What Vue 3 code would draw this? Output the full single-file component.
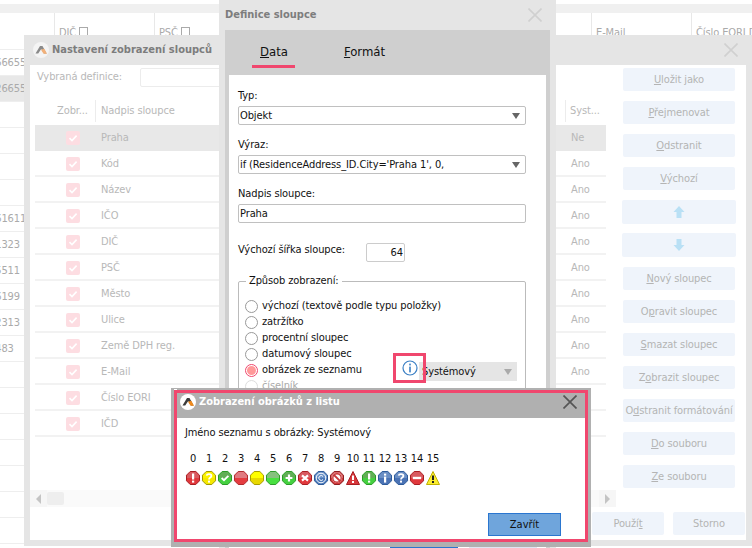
<script setup>
const bgRows = ['16665512', '12665512', '', '', '', '', '661611', '61323', '65511', '66199', '22313', '4483', '', '', '', '', '', '', '']
const cols = ['Praha','Kód','Název','IČO','DIČ','PSČ','Město','Ulice','Země DPH reg.','E-Mail','Číslo EORI','IČD']
const sideA = [['U','ložit jako'],['P','řejmenovat'],['O','dstranit'],['V','ýchozí']]
const sideB = [['N','ový sloupec'],['Op','ravit sloupec',1],['S','mazat sloupec'],['Zo','brazit sloupec',1],['Od','stranit formátování',1],['D','o souboru'],['Z','e souboru']]
const radios = ['výchozí (textově podle typu položky)','zatržítko','procentní sloupec','datumový sloupec']
const icons = [
  {c:'#e0383c',b:'#a81e22',l:'#d85a60',g:'ex'},
  {c:'#f5e800',b:'#a09800',l:'#fbf200',g:'q'},
  {c:'#44d040',b:'#2a9a26',l:'#62ae56',g:'ck'},
  {c:'#e43c40',b:'#b02a2e',l:'#e07a80',g:''},
  {c:'#e8d800',b:'#a89c00',l:'#ffff00',g:''},
  {c:'#48e040',b:'#2f9c2b',l:'#86c07e',g:''},
  {c:'#44d040',b:'#2a9a26',l:'#62ae56',g:'pl'},
  {c:'#e0383c',b:'#a81e22',l:'#d85a60',g:'x'},
  {c:'#4a78b8',b:'#2c5a9a',l:'#6a92c8',g:'co'},
  {c:'#d0383a',b:'#8e1e20',l:'#d86a6c',g:'ban'},
  {c:'#d8383c',b:'#a81e22',l:'#e87c7e',g:'tri'},
  {c:'#44d040',b:'#2a9a26',l:'#62ae56',g:'ex'},
  {c:'#4a72b4',b:'#2c5a9a',l:'#6a8ec4',g:'i'},
  {c:'#4a72b4',b:'#2c5a9a',l:'#6a8ec4',g:'q'},
  {c:'#e0383c',b:'#a81e22',l:'#d85a60',g:'mi'},
  {c:'#fbee30',b:'#c0b000',l:'#fdf680',g:'warn'}
]
</script>

<template>
  <div class="page">
    <div class="bg">
      <div class="bg-band"></div>
      <div class="bg-head">
        <div class="bg-h"></div>
        <div class="bg-h line">DIČ <i class="sq"></i></div>
        <div class="bg-h line">PSČ <i class="sq"></i></div>
        <div class="bg-h line wide"></div>
        <div class="bg-h line">E-Mail</div>
        <div class="bg-h line">Číslo EORI D</div>
      </div>
      <div v-for="(r,i) in bgRows" :key="i" class="bg-row" :class="{sel:i===1}"><span class="bg-num">{{ r }}</span></div>
    </div>

    <section class="win win-cols">
      <header class="w1-title">
        <svg class="logo" viewBox="0 0 16 16"><circle cx="8" cy="8" r="8" fill="#f4f4f4"/><path d="M2.5 11.5 7 4h2.5l4 7.5h-2.6L8.2 7 5.2 11.5z" fill="#8a8a8a"/><path d="M8 7.8 10.6 11.8H14L11.3 6.8z" fill="#f2b078"/></svg>
        <span class="w1-cap">Nastavení zobrazení sloupců</span>
        <svg class="x x1" viewBox="0 0 14 14"><path d="M0.5 0.5 13.5 13.5M13.5 0.5 0.5 13.5" stroke="#d0d0d0" stroke-width="1.6"/></svg>
      </header>
      <div class="w1-body">
        <div class="w1-left">
          <div class="def"><span class="def-l">Vybraná definice:</span><i class="def-in"></i></div>
          <div class="thead">
            <span class="c1">Zobr...</span><span class="c2">Nadpis sloupce</span><span class="c3">Syst...</span>
          </div>
          <div v-for="(c,i) in cols" :key="c" class="trow" :class="{sel:i===0}">
            <span class="c1b"><i class="cb"><svg viewBox="0 0 14 14"><path d="M3.5 7.2 6 9.6 10.6 4.6" fill="none" stroke="#fff" stroke-width="1.6"/></svg></i></span>
            <span class="c2b">{{ c }}</span><span class="c3b">{{ i===0 ? 'Ne' : 'Ano' }}</span>
          </div>
          <div class="hbar">
            <i class="arrow"><b class="tl"></b></i><i class="thumb"></i><i class="spacer"></i><i class="arrow"><b class="tr"></b></i>
          </div>
        </div>
        <div class="w1-side">
          <button v-for="b in sideA" :key="b[0]" class="btn"><u>{{ b[0] }}</u>{{ b[1] }}</button>
          <button class="btn btn-a"><svg width="12" height="14" viewBox="0 0 12 14"><path d="M6 1 11.5 7H8.5V13H3.5V7H.5z" fill="#b9e0f5"/></svg></button>
          <button class="btn btn-a"><svg width="12" height="14" viewBox="0 0 12 14"><path d="M6 13 11.5 7H8.5V1H3.5V7H.5z" fill="#b9e0f5"/></svg></button>
          <button v-for="b in sideB" :key="b[1]" class="btn">
            <template v-if="b[2]">{{ b[0][0] }}<u>{{ b[0][1] }}</u>{{ b[1] }}</template>
            <template v-else><u>{{ b[0] }}</u>{{ b[1] }}</template>
          </button>
        </div>
        <div class="w1-foot">
          <button class="btn fb">Použí<u>t</u></button>
          <button class="btn fb">Storno</button>
        </div>
      </div>
    </section>

    <section class="win win-def">
      <header class="w2-title">
        <span>Definice sloupce</span>
        <svg class="x" viewBox="0 0 14 14"><path d="M0.5 0.5 13.5 13.5M13.5 0.5 0.5 13.5" stroke="#d0d0d0" stroke-width="1.6"/></svg>
      </header>
      <div class="w2-frame">
        <nav class="tabs">
          <span class="tab on"><u>D</u>ata</span>
          <span class="tab"><u>F</u>ormát</span>
        </nav>
        <div class="panel">
          <label class="lb">Typ:</label>
          <div class="sel-box"><span>Objekt</span><b class="caret"></b></div>
          <label class="lb">Výraz:</label>
          <div class="sel-box"><span>if (ResidenceAddress_ID.City='Praha 1', 0,</span><b class="caret"></b></div>
          <label class="lb">Nadpis sloupce:</label>
          <div class="sel-box"><span>Praha</span></div>
          <div class="wid"><span class="wid-l">Výchozí šířka sloupce:</span><div class="wid-in">64</div></div>
          <fieldset class="grp">
            <legend>Způsob zobrazení:</legend>
            <div v-for="r in radios" :key="r" class="rd"><i class="ro"></i><span>{{ r }}</span></div>
            <div class="rd rd-img">
              <i class="ro on"></i><span>obrázek ze seznamu</span>
              <div class="sys"><span>Systémový</span><b class="caret lt"></b></div>
              <div class="info-box"><svg width="16" height="16" viewBox="0 0 16 16"><circle cx="8" cy="8" r="7" fill="#fff" stroke="#3a7fc4" stroke-width="1.2"/><rect x="7.2" y="3.6" width="1.6" height="1.8" fill="#3a7fc4"/><rect x="7.2" y="6.6" width="1.6" height="5.8" fill="#3a7fc4"/></svg></div>
            </div>
            <div class="rd dis"><i class="ro"></i><span>číselník</span></div>
          </fieldset>
          <div class="w2-foot"><i class="ok"></i><i class="cancel"></i></div>
        </div>
      </div>
    </section>

    <section class="win win-pop">
      <header class="w3-title">
        <svg class="logo" viewBox="0 0 16 16"><circle cx="8" cy="8" r="8" fill="#fff"/><path d="M2.5 11.5 7 4h2.5l4 7.5h-2.6L8.2 7 5.2 11.5z" fill="#3c3c3c"/><path d="M8 7.8 10.6 11.8H14L11.3 6.8z" fill="#f08a1c"/></svg>
        <span class="w3-cap">Zobrazení obrázků z listu</span>
        <svg class="x" viewBox="0 0 14 14"><path d="M0.5 0.5 13.5 13.5M13.5 0.5 0.5 13.5" stroke="#555" stroke-width="1.7"/></svg>
      </header>
      <div class="w3-body">
        <p class="w3-name">Jméno seznamu s obrázky: Systémový</p>
        <div class="ico-grid">
          <span v-for="(_,i) in icons" :key="'n'+i" class="num">{{ i }}</span>
          <svg v-for="(ic,i) in icons" :key="'i'+i" width="16" height="16" viewBox="0 0 16 16" class="ico">
            <template v-if="ic.g==='tri' || ic.g==='warn'">
              <path d="M8 1.5 14.5 14.5H1.5z" :fill="ic.c" :stroke="ic.b"/>
              <rect x="7" y="5.5" width="2" height="4.5" :fill="ic.g==='warn'?'#222':'#fff'"/>
              <rect x="7" y="11" width="2" height="2" :fill="ic.g==='warn'?'#222':'#fff'"/>
            </template>
            <template v-else>
              <path d="M5.2 1.5H10.8L14.5 5.2V10.8L10.8 14.5H5.2L1.5 10.8V5.2z" :fill="ic.c" :stroke="ic.b"/>
              <path d="M5.4 2H10.6L14 5.4V8H2V5.4z" :fill="ic.l"/>
              <template v-if="ic.g==='ex'"><rect x="7" y="3.5" width="2.2" height="6" fill="#fff"/><rect x="7" y="10.6" width="2.2" height="2" fill="#fff"/></template>
              <path v-if="ic.g==='q'" d="M5.6 5.6C6 3.6 10.4 3.6 10.4 6C10.4 7.6 8 7.4 8 9.4" fill="none" stroke="#fff" stroke-width="1.8"/>
              <rect v-if="ic.g==='q'" x="7" y="10.6" width="2" height="2" fill="#fff"/>
              <path v-if="ic.g==='ck'" d="M4.6 8 7 10.2 11.4 5.8" fill="none" stroke="#fff" stroke-width="1.8"/>
              <path v-if="ic.g==='pl'" d="M8 4.6V11.4M4.6 8H11.4" stroke="#fff" stroke-width="2.2"/>
              <path v-if="ic.g==='x'" d="M5 5.4 11 10.6M11 5.4 5 10.6" stroke="#fff" stroke-width="2.2"/>
              <template v-if="ic.g==='co'"><circle cx="8" cy="8" r="4.8" fill="none" stroke="#fff" stroke-width="1"/><path d="M10 6.4A2.4 2.4 0 1 0 10 9.6" fill="none" stroke="#fff" stroke-width="1"/></template>
              <template v-if="ic.g==='ban'"><circle cx="8" cy="8" r="5" fill="#fff"/><circle cx="8" cy="8" r="4.2" fill="none" stroke="#c8383a" stroke-width="1.4"/><path d="M4.6 4.6 11.4 11.4" stroke="#c8383a" stroke-width="2"/></template>
              <template v-if="ic.g==='i'"><rect x="7" y="3.6" width="2.2" height="2" fill="#fff"/><rect x="7" y="6.6" width="2.2" height="6" fill="#fff"/></template>
              <rect v-if="ic.g==='mi'" x="3.8" y="6.8" width="8.4" height="2.4" fill="#fff"/>
            </template>
          </svg>
        </div>
        <div class="w3-foot"><button class="close-b">Zavřít</button></div>
      </div>
    </section>
  </div>
</template>

<style>
html, body { margin: 0; background: #fff; }
</style>

<style scoped>
.page { position: relative; width: 752px; height: 548px; overflow: hidden; background: #fff; font: 11px/16px "DejaVu Sans Condensed", "DejaVu Sans", sans-serif; font-stretch: condensed; letter-spacing: -0.1px; color: #111; }
.page i { display: block; font-style: normal; }
.bg { color: #aaa; }
.bg-band { height: 9px; margin-top: 4px; background: #f0f0f0; }
.bg-head { display: flex; height: 36px; border-bottom: 1px solid #eee; }
.bg-h { width: 100px; flex: none; padding: 12px 0 0 4px; box-sizing: border-box; white-space: nowrap; }
.bg-h:first-child { width: 54px; padding: 0; }
.bg-h.wide { width: 337px; }
.bg-h.line { border-left: 1px solid #e8e8e8; }
.sq { display: inline-block !important; width: 7px; height: 7px; border: 1px solid #aaa; }
.bg-row { height: 25px; border-bottom: 1px solid #eee; display: flex; align-items: center; }
.bg-row.sel { background: #e8e8e8; }
.bg-num { margin-left: -11px; }

.win { position: absolute; box-sizing: border-box; }
.win-cols { left: 24px; top: 35px; width: 728px; height: 511px; background: #e5e5e5; padding: 0 6px 6px; display: flex; flex-direction: column; }
.w1-title { height: 30px; display: flex; align-items: center; flex: none; margin-left: 3px; padding-right: 8px; }
.logo { width: 16px; height: 16px; flex: none; }
.w1-cap { margin-left: 3px; font-weight: 700; color: #7d7d7d; letter-spacing: 0; }
.x { width: 14px; height: 14px; flex: none; margin-left: auto; }
.w1-body { position: relative; flex: 1; background: #fff; display: flex; color: #b8b8b8; }
.w1-left { width: 581px; flex: none; padding-left: 5px; box-sizing: border-box; }
.def { height: 24px; margin-bottom: 8px; display: flex; align-items: center; padding-left: 2px; }
.def-l { width: 103px; flex: none; }
.def-in { width: 240px; height: 17px; border: 1px solid #ececec; border-radius: 2px; }
.thead { height: 28px; margin-right: 5px; display: flex; align-items: center; }
.c1 { width: 61px; padding-left: 22px; box-sizing: border-box; border-right: 1px solid #ececec; line-height: 22px; }
.c2 { width: 470px; padding-left: 5px; box-sizing: border-box; border-right: 1px solid #ececec; line-height: 22px; }
.c3 { padding-left: 4px; }
.trow { height: 26px; margin-right: 5px; display: flex; align-items: center; border-bottom: 2px solid #f2f2f2; padding-top: 2px; box-sizing: border-box; }
.trow.sel { background: #e8e8e8; border-bottom-color: #e8e8e8; }
.c1b { width: 66px; padding-left: 31px; box-sizing: border-box; }
.c2b { width: 470px; }
.cb { width: 14px; height: 14px; background: #fddde2; border-radius: 2px; }
.cb svg { display: block; }
.hbar { margin-top: 53px; margin-left: -5px; margin-right: -5px; height: 17px; background: #fafafa; display: flex; }
.arrow { width: 17px; height: 17px; background: #f6f6f6; display: flex !important; align-items: center; justify-content: center; }
.thumb { width: 17px; height: 13px; margin-top: 2px; background: #eee; border-radius: 2px; }
.spacer { flex: 1; }
.tl { border: 5px solid transparent; border-right: 5px solid #c4c4c4; border-left: 0; }
.tr { border: 5px solid transparent; border-left: 5px solid #c4c4c4; border-right: 0; }
.w1-side { flex: none; width: 112px; margin-left: 12px; padding-top: 3px; display: flex; flex-direction: column; gap: 10px; }
.btn { height: 23px; width: 112px; border: 0; padding: 0; background: #eff4fb; border-radius: 2px; color: #b4b4b4; font: inherit; font-stretch: condensed; letter-spacing: inherit; flex: none; white-space: nowrap; }
.btn-a { height: 24px; width: 114px; margin-left: -1px; display: flex; align-items: center; justify-content: center; }
.btn-a + .btn-a { margin-top: -1px; }
.w1-foot { position: absolute; right: 1px; bottom: 5px; display: flex; gap: 9px; }
.fb { width: 72px; }

.win-def { left: 219px; top: 0; width: 337px; height: 548px; background: #e5e5e5; padding: 0 6px; display: flex; flex-direction: column; }
.w2-title { height: 30px; flex: none; display: flex; align-items: center; font-weight: 700; letter-spacing: 0; color: #7d7d7d; padding-right: 8px; }
.w2-frame { flex: 1; background: #cfcfcf; padding: 0 4px; }
.tabs { height: 45px; display: flex; }
.tab { font-size: 13px; line-height: 44px; color: #111; letter-spacing: 0; }
.tab:first-child { margin-left: 31px; }
.tab + .tab { margin-left: 56px; }
.tab.on { position: relative; }
.tab.on::after { content: ""; position: absolute; left: -8px; right: -7px; top: 35px; height: 3px; background: #f0476e; }
.panel { background: #fff; height: 473px; padding: 13px 9px 0; box-sizing: border-box; overflow: hidden; }
.lb { display: block; height: 18px; }
.sel-box { height: 19px; margin-bottom: 12px; width: 288px; box-sizing: border-box; border: 1px solid #c0c0c0; border-radius: 2px; display: flex; align-items: center; justify-content: space-between; padding: 0 5px 0 1px; white-space: nowrap; }
.caret { width: 0; height: 0; border: 4.5px solid transparent; border-top: 6px solid #666; border-bottom: 0; }
.caret.lt { border-top-color: #aaa; }
.wid { display: flex; align-items: flex-start; height: 19px; margin-top: 20px; }
.wid-l { width: 128px; flex: none; line-height: 14px; }
.wid-in { width: 39px; height: 19px; box-sizing: border-box; border: 1px solid #ccc; border-radius: 2px; text-align: right; padding-right: 1px; line-height: 18px; }
.grp { margin: 11px 0 0; padding: 0 0 0 6px; width: 288px; box-sizing: border-box; border: 1px solid #bbb; border-radius: 2px; height: 130px; }
.grp legend { padding: 0 3px; margin-left: 1px; line-height: 16px; }
.rd { display: flex; align-items: center; height: 16px; gap: 4px; white-space: nowrap; }
.grp .rd:first-of-type { margin-top: 9px; }
.ro { width: 13px; height: 13px; border: 1px solid #999; border-radius: 50%; background: #fff; box-sizing: border-box; flex: none; }
.ro.on { border-color: #f0476e; position: relative; }
.ro.on::after { content: ""; position: absolute; inset: 1px; border-radius: 50%; background: #f99; }
.rd-img { position: relative; }
.info-box { position: absolute; left: 148px; top: -9px; width: 33px; height: 30px; box-sizing: border-box; border: 3px solid #f0476e; display: flex; align-items: center; justify-content: center; z-index: 2; }
.sys { position: absolute; left: 174px; top: 0; width: 98px; height: 19px; background: #e5e5e5; display: flex; align-items: center; justify-content: space-between; padding: 0 5px 0 3px; box-sizing: border-box; z-index: 1; }
.dis { color: #aaa; }
.dis .ro { border-color: #ddd; }
.w2-foot { margin-top: 144px; margin-left: 152px; display: flex; gap: 11px; }
.ok { width: 71px; height: 23px; background: #2a76d0; }
.cancel { width: 70px; height: 23px; background: #dfe6f4; }

.win-pop { left: 171px; top: 388px; width: 420px; height: 159px; background: #fff; border: solid #b0b0b0; border-width: 1px 3px 0; display: flex; flex-direction: column; }
.win-pop::after { content: ""; position: absolute; inset: 1px 0 5px 0; border: 3px solid #f0476e; pointer-events: none; }
.win-pop::before { content: ""; position: absolute; left: 0; right: 0; bottom: 0; height: 5px; background: #b0b0b0; }
.w3-title { height: 29px; flex: none; background: #b0b0b0; display: flex; align-items: center; padding: 0 11px 4px 3px; margin-left: 3px; box-sizing: border-box; }
.w3-cap { margin-left: 3px; font-weight: 700; color: #fff; letter-spacing: 0; }
.w3-body { flex: 1; padding: 0 0 0 11px; display: flex; flex-direction: column; }
.w3-name { margin: 7px 0 0; height: 16px; }
.ico-grid { margin-top: 10px; display: grid; grid-template-columns: repeat(16, 16px); row-gap: 3px; justify-items: center; }
.num { line-height: 16px; }
.ico { display: block; }
.w3-foot { margin-top: auto; display: flex; justify-content: flex-end; padding: 0 27px 11px 0; }
.close-b { width: 73px; height: 23px; background: #6fa5dc; border: 1px solid #2a76d0; color: #111; font: inherit; font-stretch: condensed; padding: 0; }
</style>
